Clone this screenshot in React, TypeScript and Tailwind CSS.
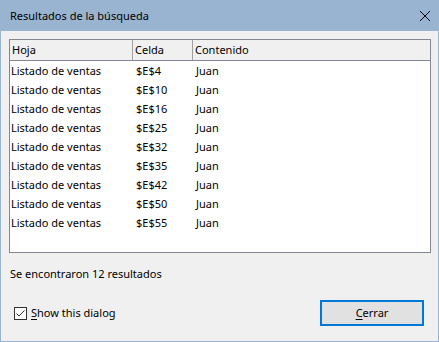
const rows = [
  ["Listado de ventas", "$E$4", "Juan"],
  ["Listado de ventas", "$E$10", "Juan"],
  ["Listado de ventas", "$E$16", "Juan"],
  ["Listado de ventas", "$E$25", "Juan"],
  ["Listado de ventas", "$E$32", "Juan"],
  ["Listado de ventas", "$E$35", "Juan"],
  ["Listado de ventas", "$E$42", "Juan"],
  ["Listado de ventas", "$E$50", "Juan"],
  ["Listado de ventas", "$E$55", "Juan"],
];

export default function App() {
  return (
    <div
      className="w-[439px] h-[342px] bg-[#99b4d1] flex flex-col px-px pb-px text-[11px] text-black"
      style={{ fontFamily: '"Noto Sans", "Liberation Sans", sans-serif' }}
    >
      {/* Title bar */}
      <div className="h-[31px] flex items-center justify-between pl-[9px] pr-[6px]">
        <span className="text-[11px] pt-px">Resultados de la búsqueda</span>
        <svg width="12" height="12" viewBox="0 0 12 12" className="mr-px">
          <path d="M1 1L11 11M11 1L1 11" stroke="#000" strokeWidth="1" />
        </svg>
      </div>

      {/* Client area */}
      <div className="flex-1 bg-[#f0f0f0] flex flex-col pl-[8px] pr-[7px] pt-[8px]">
        {/* List */}
        <div className="h-[214px] border border-[#828790] bg-white flex flex-col">
          <div className="h-[21px] grid grid-cols-[123px_60px_1fr] bg-[#f0f0f0] border-b border-[#828790]">
            <div className="pl-[2px] pt-px flex items-center border-r border-[#a0a0a0]">Hoja</div>
            <div className="pl-[2px] pt-px flex items-center border-r border-[#a0a0a0]">Celda</div>
            <div className="pl-[2px] pt-px flex items-center">Contenido</div>
          </div>
          <div className="pt-px">
            {rows.map((r, i) => (
              <div key={i} className="h-[19px] grid grid-cols-[124px_60px_1fr] items-center">
                <div className="pl-px">{r[0]}</div>
                <div className="pl-[2px]">{r[1]}</div>
                <div className="pl-[2px]">{r[2]}</div>
              </div>
            ))}
          </div>
        </div>

        <div className="mt-[12px] h-[18px] flex items-center pl-px">Se encontraron 12 resultados</div>

        {/* Bottom row */}
        <div className="mt-[17px] flex items-center justify-between">
          <div className="flex items-center gap-[4px] pl-[5px]">
            <div className="w-[13px] h-[13px] border border-[#333] bg-white flex items-center justify-center">
              <svg width="11" height="11" viewBox="0 0 11 11">
                <path d="M1.5 5.5L4 8L9.5 2.5" stroke="#333" strokeWidth="1" fill="none" />
              </svg>
            </div>
            <span>
              <span className="underline underline-offset-2">S</span>how this dialog
            </span>
          </div>
          <button className="w-[104px] h-[26px] border-2 border-[#0078d7] bg-[#e1e1e1] flex items-center justify-center mr-[7px]">
            <span>
              <span className="underline underline-offset-2">C</span>errar
            </span>
          </button>
        </div>
      </div>
    </div>
  );
}
